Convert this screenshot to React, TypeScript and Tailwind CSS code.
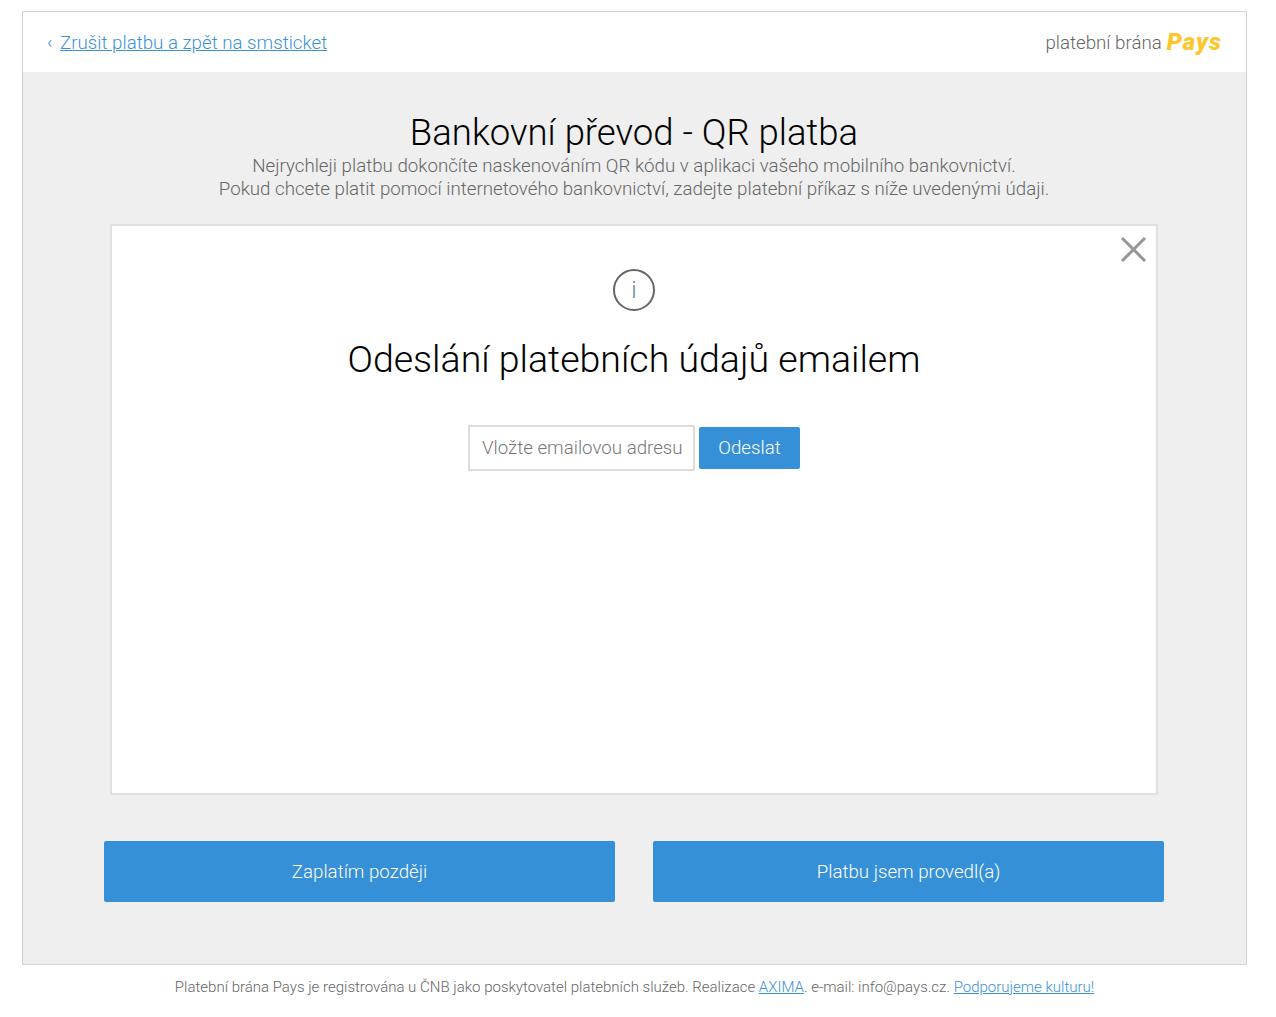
export default function App() {
  return (
    <div className="min-h-[1017px] bg-white pt-[11px] font-['Roboto',sans-serif] font-light text-[#666]">
      <div className="mx-[22px] w-[1225px] border border-[#d2d2d2] bg-[#efefef]">
        {/* Header */}
        <div className="flex h-[60px] items-center justify-between bg-white pl-6 pr-6 pt-[2px]">
          <div className="flex items-center text-[18.72px]">
            <span className="mr-[7.5px] text-[#3a92d9]">‹</span>
            <a href="#" className="text-[#3a92d9] underline">
              Zrušit platbu a zpět na smsticket
            </a>
          </div>
          <div className="flex items-baseline text-[18.72px]">
            platební brána
            <span className="ml-[5px] translate-y-px text-[24px] font-black italic leading-none tracking-[1px] text-[#fcc72c]">
              Pays
            </span>
          </div>
        </div>

        <div className="flex flex-col items-center pr-px pt-[39px]">
          <h1 className="text-[36.5px] leading-[44px] text-black">Bankovní převod - QR platba</h1>
          <p className="text-center text-[18.72px] leading-[23px]">
            Nejrychleji platbu dokončíte naskenováním QR kódu v aplikaci vašeho mobilního bankovnictví.
            <br />
            Pokud chcete platit pomocí internetového bankovnictví, zadejte platební příkaz s níže uvedenými údaji.
          </p>

          {/* Modal */}
          <div className="relative mt-[23px] flex h-[571px] w-[1048px] flex-col items-center border-2 border-[#e0e0e0] bg-white pt-[43px]">
            <button className="absolute right-[9px] top-[10px] text-[#969696]">
              <svg width="27" height="27" viewBox="0 0 27 27" fill="none" stroke="currentColor" strokeWidth="3">
                <path d="M2 2 L25 25 M25 2 L2 25" />
              </svg>
            </button>
            <div className="flex h-[42px] w-[42px] items-center justify-center rounded-full border-2 border-[#666] text-[24px] text-[#6a85a8]">
              i
            </div>
            <h2 className="mt-[23px] text-[37.5px] leading-[50px] text-black">Odeslání platebních údajů emailem</h2>
            <div className="mt-[41px] flex items-center gap-1">
              <input
                placeholder="Vložte emailovou adresu"
                className="h-[46px] w-[227px] border-2 border-[#ddd] bg-white pl-3 pr-0 text-[18.72px] font-light outline-none placeholder:text-[#777]"
              />
              <button className="h-[42px] w-[101px] rounded-[2px] bg-[#3690d7] text-[18.72px] font-light text-white">
                Odeslat
              </button>
            </div>
          </div>

          {/* Actions */}
          <div className="mb-[62px] mt-[46px] flex gap-[38px]">
            <button className="h-[61px] w-[511px] rounded-[2px] bg-[#3690d7] pt-px text-[18.72px] font-light text-white">
              Zaplatím později
            </button>
            <button className="h-[61px] w-[511px] rounded-[2px] bg-[#3690d7] pt-px text-[18.72px] font-light text-white">
              Platbu jsem provedl(a)
            </button>
          </div>
        </div>
      </div>

      {/* Footer */}
      <p className="mt-[12px] pr-[7px] text-center text-[15px] leading-5">
        Platební brána Pays je registrována u ČNB jako poskytovatel platebních služeb. Realizace{" "}
        <a href="#" className="text-[#3a92d9] underline">AXIMA</a>. e-mail: info@pays.cz.{" "}
        <a href="#" className="text-[#3a92d9] underline">Podporujeme kulturu!</a>
      </p>
    </div>
  );
}
